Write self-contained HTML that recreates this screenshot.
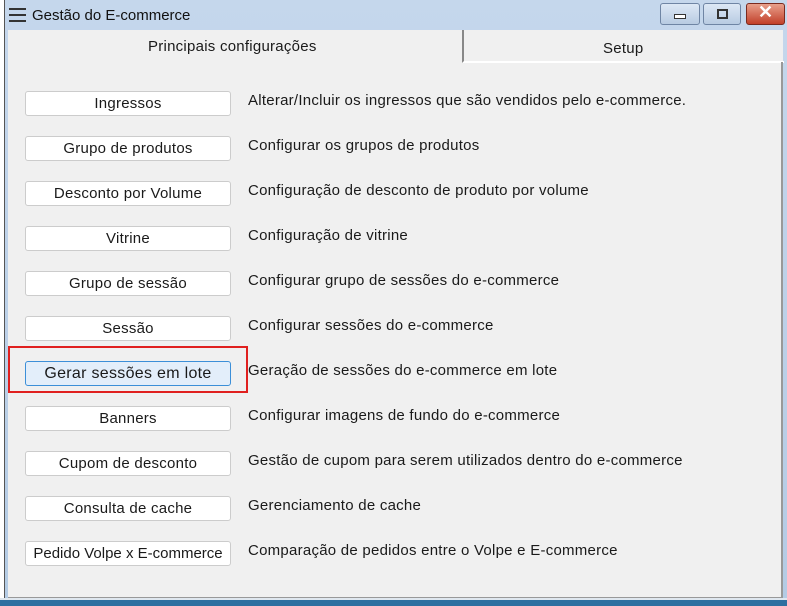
<!DOCTYPE html>
<html><head><meta charset="utf-8"><style>
body{margin:0;width:787px;height:606px;background:#fff;position:relative;overflow:hidden;font-family:"Liberation Sans",Arial,sans-serif;font-size:15px;letter-spacing:.25px;color:#1a1a1a}
.win{position:absolute;left:4px;top:0;width:783px;height:604px;background:linear-gradient(#c5d7ec,#b4cbe4);border-left:1px solid #555;}
.title{position:absolute;left:32px;top:7px;font-size:15px;letter-spacing:0;color:#111}
.ham{position:absolute;left:9px;top:8px;width:17px}
.ham div{height:2px;background:#333;margin-bottom:4px}
.content{position:absolute;left:8px;top:30px;width:775px;height:570px;background:#f0f0f0}
.tab2{position:absolute;left:462px;top:30px;width:320px;height:31px;border-left:2px solid #888;border-bottom:2px solid #fff;}
.tabt{position:absolute}
.body{position:absolute;left:8px;top:62px;width:773px;height:535px;border-right:2px solid #999;border-bottom:2px solid #999}
.btn{position:absolute;left:25px;width:204px;height:23px;background:#fff;border:1px solid #ccc;border-radius:3px;text-align:center;line-height:24px}
.d{position:absolute;left:248px;margin-top:1px}
.wb{position:absolute;top:3px;height:20px;border:1px solid #6f85a4;border-radius:3px;background:linear-gradient(#dde8f5,#b8cbe2)}
</style></head><body>
<div class="win"></div>
<div class="ham"><div></div><div></div><div></div></div>
<div class="title">Gestão do E-commerce</div>
<div class="wb" style="left:660px;width:38px"><div style="position:absolute;left:13px;top:10px;width:10px;height:3px;border:1px solid #333;background:#fff"></div></div>
<div class="wb" style="left:703px;width:36px"><div style="position:absolute;left:13px;top:5px;width:7px;height:6px;border:2px solid #333"></div></div>
<div class="wb" style="left:746px;width:37px;background:linear-gradient(#e8a08c,#c2402a);border-color:#7a2a1f"><div style="position:absolute;left:11px;top:-2px;color:#fff;font-weight:bold;font-size:18px">✕</div></div>
<div class="content"></div>
<div class="tab2"></div>
<div class="tabt" style="left:148px;top:38px">Principais configurações</div>
<div class="tabt" style="left:603px;top:40px">Setup</div>
<div class="body"></div>
<div style="position:absolute;left:0;top:600px;width:787px;height:6px;background:#2d6fa0"></div>
<div style="position:absolute;left:0;top:598px;width:787px;height:2px;background:#dfe7ef"></div>

<div class="btn" style="top:91px">Ingressos</div><div class="d" style="top:91px">Alterar/Incluir os ingressos que são vendidos pelo e-commerce.</div>
<div class="btn" style="top:136px">Grupo de produtos</div><div class="d" style="top:136px">Configurar os grupos de produtos</div>
<div class="btn" style="top:181px">Desconto por Volume</div><div class="d" style="top:181px">Configuração de desconto de produto por volume</div>
<div class="btn" style="top:226px">Vitrine</div><div class="d" style="top:226px">Configuração de vitrine</div>
<div class="btn" style="top:271px">Grupo de sessão</div><div class="d" style="top:271px">Configurar grupo de sessões do e-commerce</div>
<div class="btn" style="top:316px">Sessão</div><div class="d" style="top:316px">Configurar sessões do e-commerce</div>
<div style="position:absolute;left:8px;top:346px;width:240px;height:47px;border:2px solid #e0201f;box-sizing:border-box"></div>
<div class="btn" style="top:361px;background:#e3eefa;border-color:#3c8fd8;font-size:16px;letter-spacing:.3px">Gerar sessões em lote</div><div class="d" style="top:361px">Geração de sessões do e-commerce em lote</div>
<div class="btn" style="top:406px">Banners</div><div class="d" style="top:406px">Configurar imagens de fundo do e-commerce</div>
<div class="btn" style="top:451px">Cupom de desconto</div><div class="d" style="top:451px">Gestão de cupom para serem utilizados dentro do e-commerce</div>
<div class="btn" style="top:496px">Consulta de cache</div><div class="d" style="top:496px">Gerenciamento de cache</div>
<div class="btn" style="top:541px;letter-spacing:0">Pedido Volpe x E-commerce</div><div class="d" style="top:541px">Comparação de pedidos entre o Volpe e E-commerce</div>
</body></html>
